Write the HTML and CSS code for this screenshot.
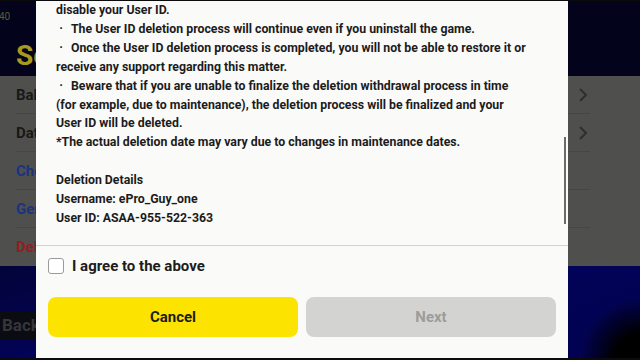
FILE: index.html
```html
<!DOCTYPE html>
<html lang="en">
<head>
<meta charset="utf-8">
<title>Delete User ID</title>
<link rel="stylesheet" href="styles.css">
</head>
<body>
<div class="screen">
  <div class="backdrop">
    <header class="top">
      <span class="clock">40</span>
      <h1 class="title">Se</h1>
    </header>
    <ul class="menu">
      <li class="item"><span class="label">Bal</span><svg class="chev" viewBox="0 0 10 16" width="10" height="16"><polyline points="2,2 8,8 2,14"/></svg></li>
      <li class="item"><span class="label">Dat</span><svg class="chev" viewBox="0 0 10 16" width="10" height="16"><polyline points="2,2 8,8 2,14"/></svg></li>
      <li class="item link"><span class="label">Che</span></li>
      <li class="item link"><span class="label">Gen</span></li>
      <li class="item danger"><span class="label">Del</span></li>
    </ul>
    <footer class="bottom">
      <span class="back">Back</span>
    </footer>
  </div>

  <div class="dialog">
    <div class="scroll">
      <p class="notice">disable your User ID.<br>
<span class="bullet">·</span>The User ID deletion process will continue even if you uninstall the game.<br>
<span class="bullet">·</span>Once the User ID deletion process is completed, you will not be able to restore it or<br>
receive any support regarding this matter.<br>
<span class="bullet">·</span>Beware that if you are unable to finalize the deletion withdrawal process in time<br>
(for example, due to maintenance), the deletion process will be finalized and your<br>
User ID will be deleted.<br>
*The actual deletion date may vary due to changes in maintenance dates.</p>
      <p class="details">Deletion Details<br>
Username: ePro_Guy_one<br>
User ID: ASAA-955-522-363</p>
      <div class="thumb"></div>
    </div>
    <label class="agree"><span class="box"></span><span class="agree-text">I agree to the above</span></label>
    <div class="actions">
      <button class="btn cancel">Cancel</button>
      <button class="btn next" disabled>Next</button>
    </div>
  </div>
</div>
</body>
</html>
```
FILE: styles.css
```css
* { box-sizing: border-box; }
html, body { margin: 0; padding: 0; }
body {
  width: 640px;
  height: 360px;
  overflow: hidden;
  font-family: Roboto, "Liberation Sans", sans-serif;
  background: #050505;
}
.screen {
  position: relative;
  width: 640px;
  height: 360px;
  border-top: 1px solid #0b0b0e;
  border-bottom: 2px solid #0b0b0e;
  overflow: hidden;
}
.backdrop {
  display: flex;
  flex-direction: column;
  height: 100%;
}
.top {
  height: 75px;
  background: #04031c;
  padding-top: 10px;
}
.clock {
  display: block;
  margin-left: -1px;
  font-size: 10px;
  line-height: 12px;
  color: #5e5c2c;
}
.title {
  margin: 17px 0 0 16px;
  font-size: 28px;
  line-height: 32px;
  font-weight: 700;
  color: #a99a1e;
}
.menu {
  list-style: none;
  margin: 0;
  padding: 0 50px 0 16px;
  height: 190px;
  background: #4f504d;
}
.item {
  height: 38px;
  display: flex;
  align-items: center;
  justify-content: space-between;
  border-bottom: 1px solid #464744;
  font-size: 15px;
  font-weight: 700;
  color: #181818;
}
.item:last-child { border-bottom: none; }
.item.link { color: #1b3380; }
.item.danger { color: #981b22; }
.chev {
  margin-right: 2px;
  fill: none;
  stroke: #2e2f2d;
  stroke-width: 2;
}
.bottom {
  flex: 1;
  background:
    radial-gradient(circle at 100% 100%, #000 0, #000 24px, rgba(2,2,70,0) 60px),
    linear-gradient(160deg, #03033a 0%, #030360 40%, #02024f 100%);
  padding-top: 46px;
}
.back {
  display: block;
  width: 40px;
  height: 27px;
  padding-left: 2px;
  background: #0b0b12;
  color: #35353c;
  font-size: 17px;
  font-weight: 700;
  line-height: 27px;
}

.dialog {
  position: absolute;
  left: 36px;
  top: 0;
  bottom: 0;
  width: 532px;
  background: #fafaf9;
  display: flex;
  flex-direction: column;
}
.scroll {
  position: relative;
  height: 244px;
  padding-left: 20px;
  overflow: hidden;
  color: #1c1c1c;
  font-size: 12.3px;
  font-weight: 700;
  line-height: 18.9px;
  white-space: nowrap;
}
.scroll p { margin: 0; }
.details { margin-top: 18.9px !important; }
.bullet {
  display: inline-block;
  width: 10px;
  margin-right: 5px;
  text-align: center;
}
.thumb {
  position: absolute;
  right: 2px;
  top: 136px;
  width: 2px;
  height: 87px;
  background: #6a6a6a;
}
.agree {
  display: flex;
  align-items: center;
  gap: 8px;
  height: 41px;
  padding: 0 12px;
  border-top: 1px solid #d3d3d1;
}
.box {
  width: 16px;
  height: 16px;
  border: 1.5px solid #9a9a9a;
  border-radius: 3px;
  background: #fff;
}
.agree-text {
  font-size: 15px;
  font-weight: 700;
  color: #1c1c1c;
}
.actions {
  display: flex;
  gap: 8px;
  padding: 11px 12px 21px;
}
.btn {
  flex: 1;
  height: 40px;
  border: none;
  border-radius: 8px;
  font-family: Roboto, "Liberation Sans", sans-serif;
  font-size: 15px;
  font-weight: 700;
}
.cancel {
  background: #fde300;
  color: #1c1c1c;
}
.next {
  background: #d3d4d1;
  color: #9c9d9a;
}
```
